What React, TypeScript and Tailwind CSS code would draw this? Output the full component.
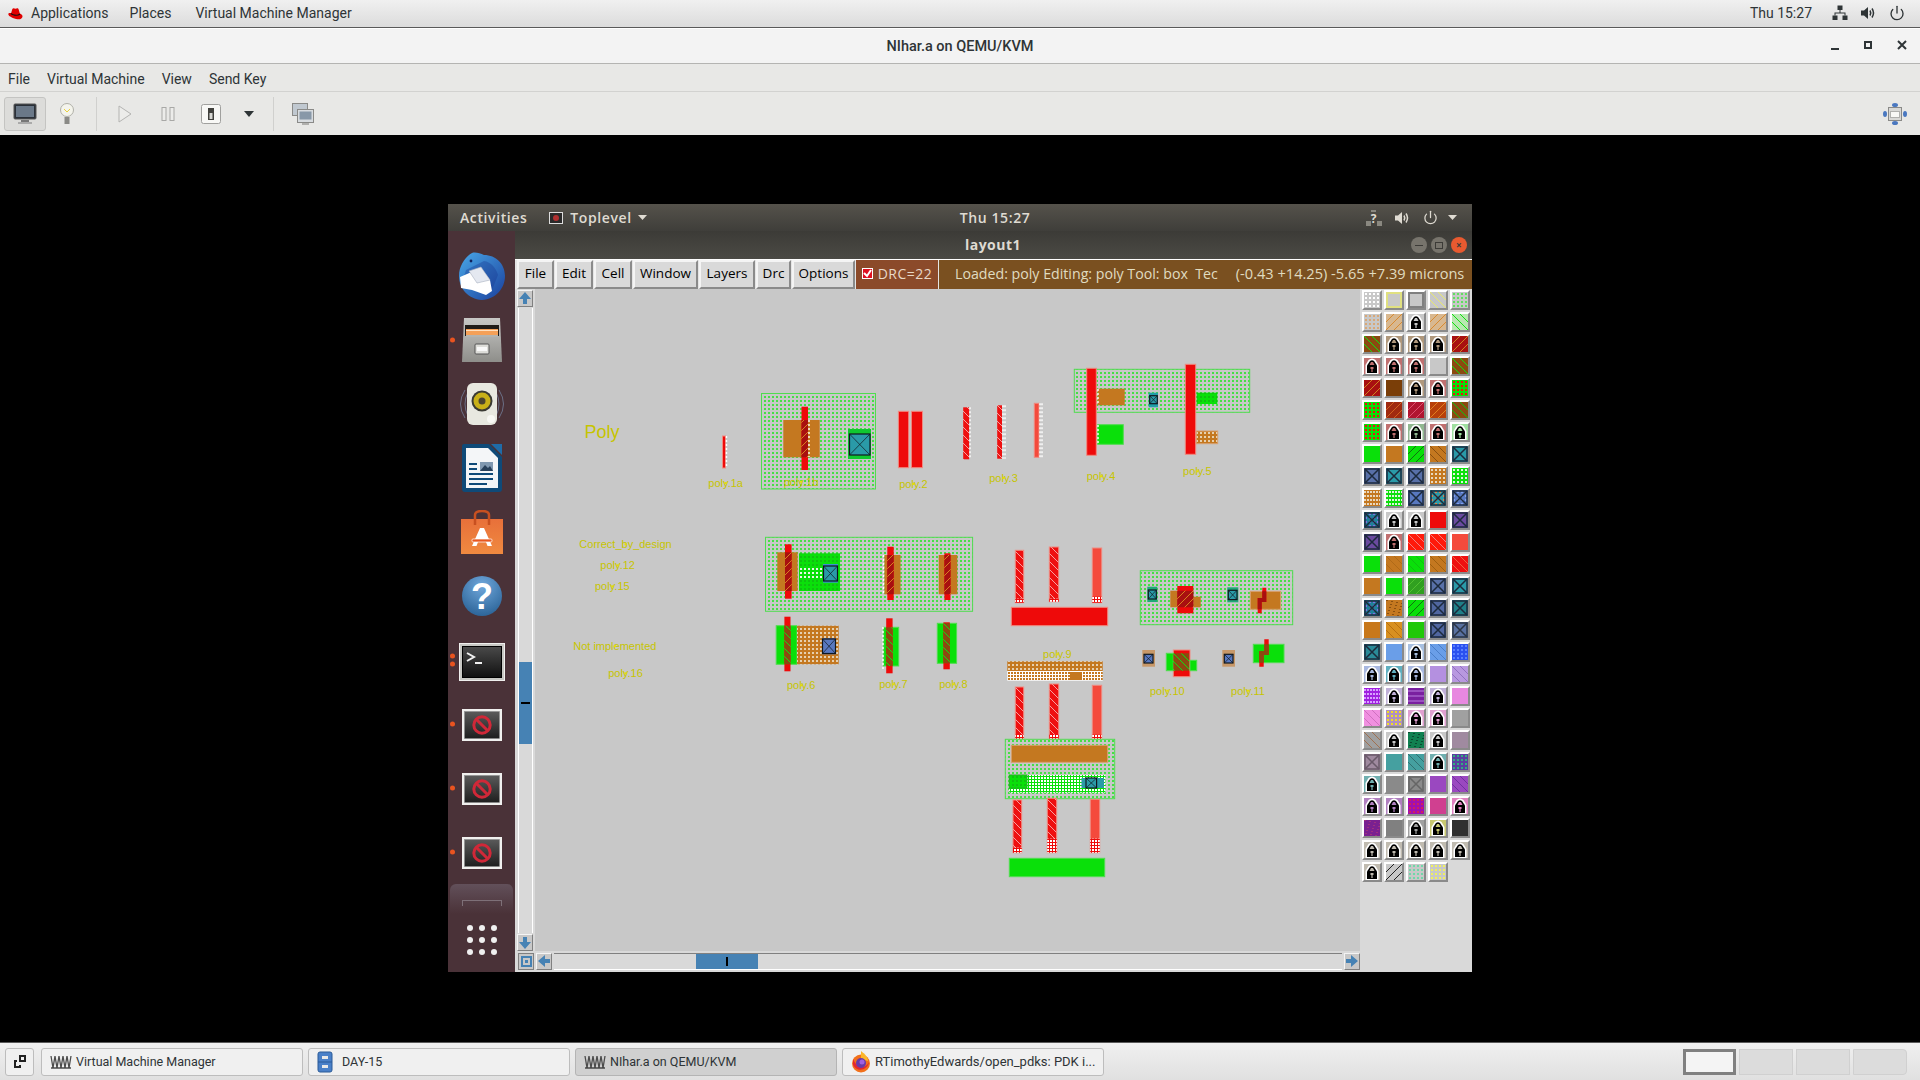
import React from "react";
import { Power } from "lucide-react";

type Cell = [string, string?, string?];

const G = "#c8c8c8";
const GREEN = "#0ae00a";
const ORANGE = "#c47820";
const RED = "#ee0a0a";
const LRED = "#f44a3c";

const lock = (c: string): Cell => [c, "lock", c];
const x = (c: string, l = "#1c2a3c"): Cell => [c, "x", l];
const xd = (c: string, d: string): Cell => [c, "xd", d];

const PALETTE: Cell[] = [
  [G, "dots", "#ffffff"], [G, "frame", "#e0e080"], [G, "frame", "#808080"], [G, "back", "#e8e870"], [G, "dots", "#60e060"],
  [G, "dots", "#d8a878"], ["#d8b890", "slash", "#d88a30"], lock(G), ["#d8b890", "slash", "#d88a30"], ["#b8e8b0", "back", "#10e010"],
  ["#8b4a10", "back", "#10e010"], lock("#b0987c"), lock("#b0987c"), lock("#b0987c"), ["#a81010", "slash", "#d08020"],
  lock("#c07070"), lock("#c07070"), lock("#c07070"), [G], ["#8b4a10", "back", "#10e010"],
  ["#a81010", "slash", "#d08020"], ["#7a3e08"], lock("#b0987c"), lock("#c07070"), [GREEN, "dots", "#ee1010"],
  [GREEN, "dots", "#ee1010"], ["#a02a10", "slash", "#d06020"], ["#b01530", "slash", "#e05070"], ["#b8400a", "slash", "#e08020"], ["#8b4a10", "back", "#10c010"],
  [GREEN, "dots", "#ee1010"], lock("#c07070"), lock("#90b890"), lock("#c07070"), lock("#a0e0a0"),
  [GREEN], [ORANGE], [GREEN, "slash", "#107010"], [ORANGE, "back", "#8a5010"], x("#2a9aa8"),
  x("#5870a8"), x("#2a9aa8"), x("#5870a8"), [ORANGE, "dots", "#e8d8c0"], [GREEN, "dots", "#e0f0e0"],
  [ORANGE, "dense", "#e8d8c0"], [GREEN, "dense", "#e0f0e0"], x("#5878c0"), xd("#2a9aa8", "#d08050"), xd("#5878c0", "#80a0f0"),
  xd("#20809a", "#8070e0"), lock(G), lock(G), [RED], x("#6a4aa0"),
  x("#6a4aa0"), lock("#c07070"), ["#ff1a0a", "back", "#f08080"], ["#ff1a0a", "back", "#f08080"], [LRED],
  [GREEN], [ORANGE, "back", "#b06a18"], [GREEN, "back", "#10c010"], [ORANGE, "back", "#a06010"], ["#ee1010", "back", "#f06040"],
  [ORANGE], [GREEN], ["#30a020", "slash", "#50c030"], x("#5870a8"), x("#2a9aa8"),
  xd("#20809a", "#8070e0"), [ORANGE, "speck", "#8a5010"], [GREEN, "slash", "#107010"], x("#5066a0"), x("#1f8088"),
  ["#c8781a"], ["#d89020", "back", "#b87010"], ["#20c808"], x("#5066a0"), x("#5870a0", "#2a3444"),
  x("#2a8a98"), ["#6a9ee8"], lock("#a8c0e0"), ["#6a9ee8", "back", "#4a7ec8"], ["#2a50f0", "dots", "#5a80ff"],
  lock("#a8b8e0"), lock("#60b0c0"), lock("#a8b8e0"), ["#b490e0"], ["#b898e0", "back", "#9070c0"],
  ["#a020e0", "dense", "#d8a0ff"], lock("#c0b0d8"), ["#7a20a0", "bands", "#9a50c0"], lock("#c0b0d8"), ["#e888e0"],
  ["#f090e0", "back", "#d070c0"], ["#b090c0", "dots", "#f0e020"], lock("#e0a0d0"), lock("#e0a0d0"), ["#a0a0a0"],
  ["#a0a0a0", "back", "#a07050"], lock(G), ["#108050", "speck", "#0a4a30"], lock(G), ["#a08aa0"],
  x("#a08aa0", "#6a5a6a"), ["#45a0a0"], ["#45a0a0", "back", "#307070"], lock("#70b0b0"), ["#5a40a0", "dots", "#30b080"],
  lock("#70b0b0"), ["#8a8a8a"], x("#8a8a8a", "#666666"), ["#9a48c0"], ["#9a48c0", "back", "#7030a0"],
  lock("#b080c0"), lock("#b080c0"), ["#a010b0", "dots", "#d02060"], ["#d04090"], lock("#e080c0"),
  ["#7a2090", "speck", "#a03080"], ["#808080"], lock("#a0a0a0"), lock("#c8c870"), ["#303030"],
  lock("#c0bbb0"), lock("#c0bbb0"), lock("#c0bbb0"), lock("#c0bbb0"), lock("#c0bbb0"),
  lock("#c0bbb0"), [G, "slash", "#222222"], [G, "dots", "#70d8a8"], [G, "dots", "#f0f060"],
];

const RANGE = [1, 5, 9, 13];

function CellArt({ cell }: { cell: Cell }) {
  const [bg, kind, c] = cell;
  return (
    <svg width="16" height="16" viewBox="0 0 16 16" shapeRendering="crispEdges">
      <rect width="16" height="16" fill={bg} />
      {kind === "dots" &&
        RANGE.flatMap((a) => RANGE.map((b) => <rect key={`${a}-${b}`} x={a} y={b} width="2" height="2" fill={c} />))}
      {kind === "dense" &&
        [0, 3, 6, 9, 12, 15].flatMap((a) =>
          [1, 5, 9, 13].map((b) => <rect key={`${a}-${b}`} x={a} y={b} width="2" height="2" fill={c} />)
        )}
      {kind === "speck" &&
        Array.from({ length: 40 }, (_, i) => (
          <rect key={i} x={(i * 7) % 16} y={(i * 11) % 16} width="2" height="1" fill={c} />
        ))}
      {kind === "bands" &&
        [2, 7, 12].map((b) => <rect key={b} y={b} width="16" height="2" fill={c} />)}
      {kind === "frame" && <rect x="1" y="1" width="14" height="14" fill="none" stroke={c} strokeWidth="2" />}
      {(kind === "back" || kind === "slash") &&
        [-16, -8, 0, 8].map((o) => (
          <line
            key={o}
            x1={o}
            y1={kind === "back" ? 0 : 16}
            x2={o + 16}
            y2={kind === "back" ? 16 : 0}
            stroke={c}
            strokeWidth="1"
            shapeRendering="auto"
          />
        ))}
      {kind === "xd" &&
        RANGE.flatMap((a) => RANGE.map((b) => <rect key={`${a}-${b}`} x={a} y={b} width="2" height="2" fill={c} />))}
      {(kind === "x" || kind === "xd") && (
        <g fill="none" stroke={kind === "x" ? c : "#1c2a3c"} strokeWidth="1.5" shapeRendering="auto">
          <rect x="1" y="1" width="14" height="14" />
          <path d="M1 1L15 15M15 1L1 15" />
        </g>
      )}
      {kind === "lock" && (
        <g shapeRendering="auto">
          <path d="M1.5 16V7L4.5 2Q8 -1 11.5 2L14.5 7V16Z" fill="#ffffff" />
          <path d="M3 15V7.5L6 3Q8 1.5 10 3L13 7.5V15Z" fill="#000000" />
          <path d="M5.5 7L7 4H9L10.5 7Z" fill={c} />
          <rect x="6.5" y="9" width="3" height="2" fill={c} />
          <rect x="7.4" y="11" width="1.2" height="3" fill={c} />
        </g>
      )}
    </svg>
  );
}

function Dots({ id, bg, c, p = 4, s = 2 }: { id: string; bg?: string; c: string; p?: number; s?: number }) {
  return (
    <pattern id={id} width={p} height={p} patternUnits="userSpaceOnUse">
      {bg && <rect width={p} height={p} fill={bg} />}
      <rect width={s} height={s} fill={c} />
    </pattern>
  );
}

function Hatch({ id, bg, c, back }: { id: string; bg: string; c: string; back?: boolean }) {
  return (
    <pattern id={id} width="8" height="8" patternUnits="userSpaceOnUse">
      <rect width="8" height="8" fill={bg} />
      <path d={back ? "M0 0L8 8" : "M0 8L8 0"} stroke={c} strokeWidth="1" />
    </pattern>
  );
}

type RectProps = { b: number[]; f: string; s?: string };
function R({ b, f, s }: RectProps) {
  return <rect x={b[0]} y={b[1]} width={b[2] - b[0]} height={b[3] - b[1]} fill={f} stroke={s} />;
}

// dotted white edge next to a poly bar
function Edge({ at, y1, y2 }: { at: number; y1: number; y2: number }) {
  return <line x1={at} y1={y1} x2={at} y2={y2} stroke="#ffffff" strokeWidth="1.4" strokeDasharray="2 2" />;
}

function Via({ o, oc, b, c = "#2a9aa8" }: { o: number[]; oc: string; b: number[]; c?: string }) {
  return (
    <g>
      <R b={o} f={oc} />
      <rect x={b[0]} y={b[1]} width={b[2] - b[0]} height={b[3] - b[1]} fill={c} stroke="#101820" strokeWidth="1.2" />
      <path d={`M${b[0]} ${b[1]}L${b[2]} ${b[3]}M${b[2]} ${b[1]}L${b[0]} ${b[3]}`} stroke="#101820" strokeWidth="0.7" />
    </g>
  );
}

function Label({ x: lx, y, t, big }: { x: number; y: number; t: string; big?: boolean }) {
  return (
    <g>
      <text x={lx} y={y} textAnchor="middle" dominantBaseline="central" fill="#c6c400" fontSize={big ? 18 : 11}>
        {t}
      </text>
      {!big && <rect x={lx - 1} y={y - 1} width="2" height="2" fill="#e8e000" />}
    </g>
  );
}

function Bar({ b, f, dots }: { b: number[]; f: string; dots: number }) {
  const top = b[3] - dots;
  return (
    <g>
      <R b={b} f={f} s="#f08a80" />
      <R b={[b[0], top, b[2], b[3]]} f="url(#whiteOnRed)" />
    </g>
  );
}

function LayoutCanvas() {
  return (
    <svg viewBox="535 290 825 661" className="block h-full w-full font-['Liberation_Sans',sans-serif]">
      <defs>
        <Dots id="well" c="#46de46" />
        <Dots id="orangeDots" bg="#c47820" c="#e6d0b0" />
        <Dots id="greenDots" bg="#0ae00a" c="#e8f8e8" />
        <Dots id="greenDark" bg="#0ae00a" c="#10c010" />
        <Dots id="whiteOnRed" bg="#ee0a0a" c="#ffffff" p={3} />
        <Dots id="whiteOrange" bg="#ffffff" c="#c47820" p={3} />
        <Dots id="whiteGreen" bg="#0ae00a" c="#ffffff" p={3} s={2} />
        <Hatch id="polyGate" bg="#a81010" c="#d88020" />
        <Hatch id="nGate" bg="#8b4a10" c="#10e010" back />
        <Hatch id="polyRes" bg="#ee1010" c="#f8a0a0" back />
      </defs>

      <Label x={602} y={432} t="Poly" big />
      <Label x={725.6} y={483} t="poly.1a" />
      <Label x={913.4} y={484} t="poly.2" />
      <Label x={1003.5} y={478} t="poly.3" />
      <Label x={1101} y={476.3} t="poly.4" />
      <Label x={1197.3} y={471.3} t="poly.5" />
      <Label x={625.5} y={544.3} t="Correct_by_design" />
      <Label x={617.6} y={565.3} t="poly.12" />
      <Label x={612.3} y={586.3} t="poly.15" />
      <Label x={614.8} y={646} t="Not implemented" />
      <Label x={625.5} y={673.3} t="poly.16" />
      <Label x={801.2} y={685.3} t="poly.6" />
      <Label x={893.4} y={684.3} t="poly.7" />
      <Label x={953.4} y={684.3} t="poly.8" />
      <Label x={1057.3} y={654.3} t="poly.9" />
      <Label x={1167.3} y={690.7} t="poly.10" />
      <Label x={1248} y={690.7} t="poly.11" />

      {/* poly.1a */}
      <R b={[722.5, 436, 725.5, 468]} f={RED} s="#f08a80" />
      <Edge at={726.5} y1={436} y2={468} />

      {/* poly.1b */}
      <R b={[761.5, 393.5, 875.5, 489]} f="url(#well)" s="#50dc50" />
      <Label x={801} y={481.7} t="poly.1b" />
      <R b={[783.3, 420, 819.7, 457.3]} f={ORANGE} />
      <R b={[801.5, 406.7, 808, 470]} f={RED} />
      <R b={[801.5, 420, 808, 457.3]} f="url(#polyGate)" />
      <Edge at={809} y1={420} y2={457} />
      <Via o={[848, 429, 871, 459]} oc="#10c830" b={[849.5, 434, 870, 455]} />

      {/* poly.2 */}
      <R b={[898.4, 411.3, 908.7, 467.7]} f={RED} s="#f08a80" />
      <R b={[911.4, 411.3, 922.5, 467.7]} f={RED} s="#f08a80" />

      {/* poly.3 */}
      <R b={[963.2, 407.3, 969.2, 459.3]} f="url(#polyRes)" />
      <Edge at={970} y1={407.3} y2={459.3} />
      <R b={[997.2, 405.3, 1002, 458.7]} f="url(#polyRes)" />
      <Edge at={1003} y1={405.3} y2={458.7} />
      <Edge at={1005} y1={405.3} y2={458.7} />
      <R b={[1034.3, 403.3, 1039, 457.3]} f={LRED} s="#f08a80" />
      <Edge at={1040} y1={403.3} y2={457.3} />
      <Edge at={1042} y1={403.3} y2={457.3} />

      {/* poly.4, poly.5 */}
      <R b={[1074.3, 369.3, 1249.7, 412.3]} f="url(#well)" s="#50dc50" />
      <R b={[1097.7, 388.7, 1124.7, 405.3]} f={ORANGE} />
      <R b={[1097.7, 424.7, 1123.3, 444.3]} f={GREEN} s="#50dc50" />
      <R b={[1086.7, 368.3, 1096.3, 455.3]} f={RED} s="#f08a80" />
      <R b={[1185.3, 364.3, 1195.7, 454.3]} f={RED} s="#f08a80" />
      <Edge at={1098} y1={389} y2={405} />
      <Edge at={1098} y1={425} y2={444} />
      <Via o={[1148.7, 392.7, 1158, 407.3]} oc="#20a0a8" b={[1149.7, 395.7, 1157.3, 403.7]} />
      <R b={[1196.7, 392.7, 1217.3, 404]} f="url(#greenDark)" />
      <R b={[1196.3, 431, 1217.7, 443.7]} f="url(#orangeDots)" s="#d8a070" />

      {/* poly.12 / 15 */}
      <R b={[765.5, 537.3, 972.6, 611.3]} f="url(#well)" s="#50dc50" />
      <R b={[777.3, 552.3, 797.6, 591]} f={ORANGE} />
      <R b={[785, 544.3, 791.6, 598.7]} f={RED} />
      <R b={[785, 552.3, 791.6, 591]} f="url(#polyGate)" />
      <R b={[799, 553.3, 840, 591]} f="url(#greenDark)" />
      <R b={[799, 566, 823, 580]} f="url(#greenDots)" />
      <Via o={[823, 564, 838, 582.7]} oc="#3a90d0" b={[823.5, 566, 837.5, 581]} />
      <R b={[884.4, 555, 900.5, 594.3]} f={ORANGE} />
      <R b={[887.3, 546.7, 893.7, 600]} f={RED} />
      <R b={[887.3, 555, 893.7, 594.3]} f="url(#polyGate)" />
      <Edge at={883.5} y1={555} y2={594} />
      <R b={[938.7, 555, 957.3, 594.3]} f={ORANGE} />
      <R b={[944.4, 553.3, 950.5, 600]} f={RED} />
      <R b={[944.4, 555, 950.5, 594.3]} f="url(#polyGate)" />

      {/* poly.6, 7, 8 */}
      <R b={[776.2, 625.7, 797, 664.3]} f={GREEN} s="#50dc50" />
      <R b={[797, 625.7, 838.7, 664.3]} f="url(#orangeDots)" />
      <R b={[784.4, 616.7, 790.5, 671.3]} f={RED} />
      <R b={[784.4, 625.7, 790.5, 664.3]} f="url(#nGate)" />
      <Via o={[822, 638.3, 836, 654.3]} oc="#5878c0" b={[822.5, 639, 835.5, 653.5]} c="#5878c0" />
      <R b={[883.7, 627.3, 898.7, 666]} f={GREEN} s="#50dc50" />
      <R b={[886.2, 618.3, 892.6, 673.3]} f={RED} />
      <R b={[886.2, 627.3, 892.6, 666]} f="url(#nGate)" />
      <Edge at={883} y1={627} y2={670} />
      <R b={[937.3, 623.3, 956.6, 663.3]} f={GREEN} s="#50dc50" />
      <R b={[943.4, 622.3, 949.8, 669.3]} f={RED} />
      <R b={[943.4, 623.3, 949.8, 663.3]} f="url(#nGate)" />

      {/* poly.9 */}
      <Bar b={[1015.3, 550.3, 1023.7, 602.7]} f="url(#polyRes)" dots={4} />
      <Bar b={[1049.3, 547, 1058.7, 601.7]} f="url(#polyRes)" dots={3} />
      <Bar b={[1092.3, 548, 1101.7, 602.7]} f={LRED} dots={6} />
      <R b={[1011.3, 607.3, 1107.7, 625.7]} f={RED} s="#f08a80" />
      <R b={[1007.3, 661.3, 1102.7, 671]} f="url(#orangeDots)" />
      <R b={[1007.3, 671, 1102.7, 680.7]} f="url(#whiteOrange)" />
      <R b={[1070, 672, 1082, 680]} f={ORANGE} />
      <Bar b={[1015.3, 687, 1023.7, 738.7]} f="url(#polyRes)" dots={4} />
      <Bar b={[1049.3, 684, 1058.7, 738.7]} f="url(#polyRes)" dots={4} />
      <Bar b={[1092.3, 685.3, 1101.7, 738.7]} f={LRED} dots={4} />
      <R b={[1005.3, 739.3, 1114.7, 798.7]} f="url(#well)" s="#50dc50" />
      <R b={[1011.3, 745.3, 1107.7, 762.3]} f={ORANGE} s="#d8a070" />
      <R b={[1009.3, 775, 1105.3, 792.7]} f="url(#whiteGreen)" />
      <R b={[1009.3, 775, 1027, 788]} f="url(#greenDark)" s="#20b020" />
      <R b={[1081.5, 778, 1104, 788]} f="#2a9aa8" />
      <Via o={[1086, 778, 1096.6, 788]} oc="#2a9aa8" b={[1086, 778, 1096.6, 788]} />
      <Bar b={[1013, 800, 1021.7, 852.7]} f="url(#polyRes)" dots={5} />
      <Bar b={[1047.3, 798.3, 1056.7, 852.7]} f="url(#polyRes)" dots={14} />
      <Bar b={[1090.3, 799.3, 1099.7, 852.7]} f={LRED} dots={14} />
      <R b={[1009.3, 858.3, 1104.7, 876.7]} f={GREEN} s="#50dc50" />

      {/* poly.10, poly.11 */}
      <R b={[1140.3, 570.7, 1292.7, 624.7]} f="url(#well)" s="#50dc50" />
      <Via o={[1147.3, 586.7, 1157.3, 602]} oc="#20a878" b={[1148.3, 590, 1156.3, 599]} />
      <R b={[1170.3, 590.7, 1177.3, 607.3]} f={ORANGE} />
      <R b={[1193.3, 596.7, 1200.7, 607.3]} f={ORANGE} />
      <R b={[1177.3, 586, 1193.3, 613.3]} f={RED} />
      <R b={[1177.3, 590.7, 1193.3, 607.3]} f="url(#polyGate)" />
      <Via o={[1227.3, 587.3, 1238.3, 602.3]} oc="#20a878" b={[1228.3, 590.3, 1237, 599.6]} />
      <R b={[1250.3, 591.3, 1280.7, 609.3]} f={ORANGE} s="#d8a070" />
      <polygon points="1262.3,587.7 1266.3,587.7 1266.3,602 1261.7,602 1261.7,613.3 1257.7,613.3 1257.7,598 1262.3,598" fill={RED} />
      <polygon points="1262.3,591.3 1266.3,591.3 1266.3,602 1261.7,602 1261.7,609.3 1257.7,609.3 1257.7,598 1262.3,598" fill="#a81010" />
      <Via o={[1142.3, 650, 1155, 666.7]} oc="#c89868" b={[1144, 654.3, 1153, 663]} c="#5878c0" />
      <R b={[1173.3, 650, 1190, 676.7]} f={RED} s="#f08a80" />
      <R b={[1166.3, 653.3, 1173.3, 670.7]} f={GREEN} s="#50dc50" />
      <R b={[1190, 660.3, 1196.7, 670.7]} f={GREEN} s="#50dc50" />
      <R b={[1173.3, 653.3, 1189, 670.7]} f="url(#nGate)" />
      <Via o={[1222.3, 650, 1235, 666.7]} oc="#c89868" b={[1224.3, 654.3, 1233, 663]} c="#5878c0" />
      <R b={[1253.3, 644.3, 1284, 662.7]} f={GREEN} s="#50dc50" />
      <polygon points="1264.3,639.3 1268.7,639.3 1268.7,655 1263.7,655 1263.7,666.7 1259.3,666.7 1259.3,651 1264.3,651" fill={RED} />
      <polygon points="1264.3,644.3 1268.7,644.3 1268.7,655 1263.7,655 1263.7,662.7 1259.3,662.7 1259.3,651 1264.3,651" fill="#8b4a10" />
    </svg>
  );
}

function Thunderbird() {
  return (
    <svg width="48" height="48" viewBox="0 0 48 48">
      <defs>
        <linearGradient id="tb" x1="0" y1="0" x2="1" y2="1">
          <stop offset="0" stopColor="#49a8e8" />
          <stop offset="1" stopColor="#1a3f9c" />
        </linearGradient>
      </defs>
      <path d="M14 1C7 5 1 14 1 24C1 36 10 47 24 48C38 47 47 36 47 24C47 12 38 3 26 3C22 1 17 0 14 1Z" fill="url(#tb)" />
      <path d="M8 18L26 9C33 10 38 16 40 23L34 38L27 41L4 31Z" fill="#16358c" opacity="0.35" />
      <path d="M2 25L23 16L32 28L34 39L28 43L14 38L3 36Z" fill="#ffffff" />
      <path d="M11 19L23 15L32 28L19 31Z" fill="#e4e8f0" stroke="#a8b0c0" strokeWidth="0.6" />
      <circle cx="13" cy="9" r="1.4" fill="#10225c" />
    </svg>
  );
}

function Cabinet() {
  return (
    <svg width="42" height="46" viewBox="0 0 42 46">
      <defs>
        <linearGradient id="cab" x1="0" y1="0" x2="0" y2="1">
          <stop offset="0" stopColor="#c8c8c6" />
          <stop offset="1" stopColor="#8e8e8a" />
        </linearGradient>
      </defs>
      <path d="M3 1H39L41 45H1Z" fill="url(#cab)" />
      <rect x="4" y="8" width="34" height="11" fill="#201c18" />
      <rect x="5" y="12" width="32" height="6" fill="#f4a058" />
      <rect x="5" y="13" width="32" height="1" fill="#ffe0c0" />
      <rect x="5" y="18" width="32" height="2" fill="#b4b4b0" />
      <rect x="14" y="27" width="14" height="10" rx="1" fill="#dcdcd8" stroke="#555" />
      <rect x="16" y="30" width="10" height="4" fill="#f8f8f8" />
    </svg>
  );
}

function Speaker() {
  return (
    <svg width="48" height="44" viewBox="0 0 48 44">
      <g fill="none" stroke="#7a8aa8" strokeWidth="1" opacity="0.7">
        <path d="M7 8Q-2 22 7 36" />
        <path d="M41 8Q50 22 41 36" />
        <path d="M10 10Q4 22 10 34" />
        <path d="M38 10Q44 22 38 34" />
      </g>
      <rect x="9" y="1" width="30" height="42" rx="6" fill="#e8e8e0" />
      <circle cx="24" cy="19" r="10.500" fill="#3a3a34" />
      <circle cx="24" cy="19" r="8.500" fill="#c8b018" />
      <circle cx="24" cy="19" r="3.500" fill="#4a4430" />
      <circle cx="33" cy="37" r="4" fill="#f8f8f4" />
    </svg>
  );
}

function Writer() {
  return (
    <svg width="42" height="50" viewBox="0 0 42 50">
      <path d="M3 1H28L41 14V46Q41 49 38 49H4Q1 49 1 46V3Q1 1 3 1Z" fill="#0f4a78" />
      <path d="M5 5H27L37 15V45H5Z" fill="#f4f6f8" />
      <path d="M30 1H41V12Z" fill="#1f6ca8" />
      <rect x="19" y="19" width="13" height="9" fill="#8098b0" />
      <path d="M19 28L24 22L27 25L29 23L32 28Z" fill="#28405a" />
      <g fill="#0f4a78">
        <rect x="8" y="20" width="8" height="2" />
        <rect x="8" y="25" width="8" height="2" />
        <rect x="8" y="30" width="24" height="2" />
        <rect x="8" y="35" width="24" height="2" />
        <rect x="8" y="40" width="18" height="2" />
      </g>
    </svg>
  );
}

function Store() {
  return (
    <svg width="42" height="44" viewBox="0 0 42 44">
      <defs>
        <linearGradient id="bag" x1="0" y1="0" x2="0" y2="1">
          <stop offset="0" stopColor="#e8703a" />
          <stop offset="1" stopColor="#f08a40" />
        </linearGradient>
      </defs>
      <rect y="9" width="42" height="35" fill="url(#bag)" />
      <path d="M14 15V5Q14 1 21 1Q28 1 28 5V15" fill="none" stroke="#c85020" strokeWidth="2.5" />
      <path d="M11 36L19 18H23L31 36H26.500L25 32H17L15.500 36Z" fill="#ffffff" />
      <rect x="11" y="29" width="20" height="3" rx="1" fill="#e85820" stroke="#fff" strokeWidth="0.7" />
    </svg>
  );
}

function Help() {
  return (
    <svg width="42" height="42" viewBox="0 0 42 42" className="font-['Liberation_Sans',sans-serif]">
      <defs>
        <radialGradient id="hlp" cx="0.5" cy="0.25" r="0.85">
          <stop offset="0" stopColor="#70a8dc" />
          <stop offset="1" stopColor="#245c90" />
        </radialGradient>
      </defs>
      <circle cx="21" cy="21" r="20" fill="url(#hlp)" />
      <text x="21" y="34" textAnchor="middle" fill="#ffffff" fontSize="36" fontWeight="700">
        ?
      </text>
    </svg>
  );
}

function Terminal() {
  return (
    <svg width="46" height="38" viewBox="0 0 46 38" className="mt-[3px]">
      <defs>
        <linearGradient id="term" x1="0" y1="0" x2="0" y2="1">
          <stop offset="0" stopColor="#4a4a4a" />
          <stop offset="1" stopColor="#101010" />
        </linearGradient>
      </defs>
      <rect x="0.500" y="0.500" width="45" height="37" fill="#c8c8c4" stroke="#f0f0ee" />
      <rect x="3.500" y="3.500" width="39" height="31" fill="url(#term)" stroke="#000" />
      <path d="M8 10L15 14L8 18" fill="none" stroke="#f0f0f0" strokeWidth="2" />
      <rect x="16" y="19" width="7" height="2" fill="#f0f0f0" />
    </svg>
  );
}

function Blocked() {
  return (
    <svg width="40" height="32" viewBox="0 0 40 32" className="mt-[1px]">
      <defs>
        <linearGradient id="blk" x1="0" y1="0" x2="0" y2="1">
          <stop offset="0" stopColor="#5a5a5a" />
          <stop offset="1" stopColor="#1e1e1e" />
        </linearGradient>
      </defs>
      <rect width="40" height="32" fill="#f0f0ee" />
      <rect x="2.500" y="2.500" width="35" height="27" fill="url(#blk)" stroke="#888" strokeWidth="0.5" />
      <circle cx="20" cy="16" r="8.200" fill="none" stroke="#d02838" strokeWidth="3" />
      <path d="M14.500 10.500L25.500 21.500" stroke="#d02838" strokeWidth="3" />
    </svg>
  );
}

function Vmm() {
  return (
    <svg width="22" height="14" viewBox="0 0 22 14" fill="none" stroke="#4c4c4c" strokeWidth="1.300">
      <path d="M1 1L3 13L5 1L7 13L9 1L11 13L13 1L15 13L17 1L19 13L21 1" />
      <path d="M1 13H21" stroke="#333" />
    </svg>
  );
}

function TaskButton({
  active,
  icon,
  label,
  wide,
}: {
  active?: boolean;
  icon: React.ReactNode;
  label: string;
  wide?: boolean;
}) {
  return (
    <div
      className={
        active
          ? "flex h-7 w-[262px] items-center gap-[4px] rounded-[3px] border border-[#b4b4b4] bg-[#d0d0d0] pl-[8px] text-[#2e3436]"
          : "flex h-7 w-[262px] items-center gap-[4px] rounded-[3px] border border-[#bdbdbd] bg-[#f0f0f0] pl-[8px] text-[#2e3436]"
      }
    >
      {icon}
      <span className={wide ? "whitespace-nowrap pt-px text-[13px]" : "whitespace-nowrap pt-px text-[12.5px]"}>
        {label}
      </span>
    </div>
  );
}

function Arrow({ d }: { d: string }) {
  return (
    <div className="flex h-[17px] w-4 items-center justify-center border border-t-[#f4f4f4] border-l-[#f4f4f4] border-b-[#808080] border-r-[#808080] bg-[#c8c8c8]">
      <svg width="14" height="14" viewBox="0 0 14 14">
        <path d={d} fill="#4682b4" />
      </svg>
    </div>
  );
}

function Slot({ dots = 0, children }: { dots?: number; children?: React.ReactNode }) {
  return (
    <div className="relative flex h-16 items-center justify-center">
      {dots > 0 && (
        <div className="absolute left-[2px] top-1/2 flex -translate-y-1/2 flex-col gap-[3px]">
          {Array.from({ length: dots }, (_, i) => (
            <span key={i} className="block h-[5px] w-[5px] rounded-full bg-[#e95420]" />
          ))}
        </div>
      )}
      {children}
    </div>
  );
}

const MENU = ["File", "Edit", "Cell", "Window", "Layers", "Drc", "Options"];
const MENU_W = ["w-[37px]", "w-[38px]", "w-[38px]", "w-[65px]", "w-[56px]", "w-[35px]", "w-[63px]"];

export default function App() {
  return (
    <div className="flex h-screen w-[1920px] flex-col overflow-hidden bg-black font-['Roboto',sans-serif]">
      {/* desktop top panel */}
      <div className="flex h-7 items-center border-b border-[#5a5a5a] bg-gradient-to-b from-[#f0f0f0] to-[#dcdcdc] pb-[1px] text-[14px] text-[#2e3436]">
        <svg width="17" height="13" viewBox="0 0 15 12" className="ml-[7px]">
          <path d="M1 6C0 8 4 10 8 11C11 12 14 11 14 8.500C14 7.500 13 6.500 11.500 6L10.500 2.500C10 1 9 1 7.500 1.700C6 1 5 1 4.500 2L3.500 5.500C2.500 5.500 1.500 5.200 1 6Z" fill="#e00000" />
          <path d="M3.500 5.500C5 7 9 8 11.500 6L11.800 7.200C9 9 5 8 3 6.500Z" fill="#111111" />
        </svg>
        <span className="ml-[7px]">Applications</span>
        <span className="ml-[21px]">Places</span>
        <span className="ml-[24px]">Virtual Machine Manager</span>
        <span className="ml-auto">Thu 15:27</span>
        <svg width="16" height="16" viewBox="0 0 16 16" fill="#2e3436" className="ml-[20px]">
          <rect x="5.500" y="0.500" width="5" height="4.500" />
          <rect x="0.500" y="10.500" width="5" height="4.500" />
          <rect x="10.500" y="10.500" width="5" height="4.500" />
          <path d="M7.500 5H8.500V7.500H13.500V10.500H12.500V8.500H3.500V10.500H2.500V7.500H7.500Z" />
        </svg>
        <svg width="16" height="16" viewBox="0 0 16 16" fill="none" stroke="#2e3436" className="ml-[12px]">
          <path d="M1 5.500H4L8 2V14L4 10.500H1Z" fill="#2e3436" stroke="none" />
          <path d="M10 5.500Q11.500 8 10 10.500" strokeWidth="1.500" />
          <path d="M12 3.500Q15 8 12 12.500" strokeWidth="1.500" />
        </svg>
        <Power size={16} strokeWidth={2} color="#2e3436" className="ml-[13px] mr-[15px]" />
      </div>

      {/* virt-viewer title */}
      <div className="relative flex h-9 items-center justify-center border-t border-b border-t-white border-b-[#b4b4b2] bg-[#f3f3f3] pt-px text-[14.5px] font-medium text-[#2e3436]">
        NIhar.a on QEMU/KVM
        <div className="absolute right-[13px] top-0 flex h-full items-center gap-[25px]">
          <div className="mt-[6px] h-[2px] w-[8px] bg-[#2e3436]" />
          <div className="mt-[-2px] h-[8px] w-[8px] border-2 border-[#2e3436]" />
          <svg width="10" height="10" viewBox="0 0 10 10" stroke="#2e3436" strokeWidth="2" className="mt-[-2px]">
            <path d="M1 1L9 9M9 1L1 9" />
          </svg>
        </div>
      </div>

      {/* menu */}
      <div className="flex h-7 items-center gap-[17px] border-b border-[#d2d2d0] bg-[#e8e8e6] pl-2 pt-[3px] text-[14px] text-[#2e3436]">
        <span>File</span>
        <span>Virtual Machine</span>
        <span>View</span>
        <span>Send Key</span>
      </div>

      {/* toolbar */}
      <div className="flex h-[43px] items-center bg-[#e8e8e6]">
        <div className="ml-1 flex h-[34px] w-[42px] items-center justify-center rounded-[3px] border border-[#c4c4c2] bg-[#dcdcda]">
          <svg width="24" height="22" viewBox="0 0 24 22">
            <rect x="1" y="1" width="22" height="15" rx="1" fill="#2a3038" stroke="#555" />
            <rect x="3" y="3" width="18" height="11" fill="#6a7888" />
            <rect x="8" y="17" width="8" height="2" fill="#777" />
            <rect x="5" y="19" width="14" height="2" fill="#aaa" />
          </svg>
        </div>
        <svg width="16" height="24" viewBox="0 0 16 24" className="ml-[13px]">
          <circle cx="8" cy="8" r="6.500" fill="#f4f4ec" stroke="#b0b0a8" />
          <path d="M5 7L8 10L11 7" fill="none" stroke="#e8d040" />
          <rect x="5.500" y="15" width="5" height="7" fill="#8a8a86" />
        </svg>
        <div className="ml-[21px] h-[34px] w-px bg-[#d0d0ce]" />
        <svg width="14" height="18" viewBox="0 0 14 18" className="ml-[21px]">
          <path d="M1 1L13 9L1 17Z" fill="#ececea" stroke="#b4b4b2" />
        </svg>
        <svg width="14" height="14" viewBox="0 0 14 14" className="ml-[29px]" fill="#ececea" stroke="#a8a8a6">
          <rect x="1" y="0.500" width="4" height="13" />
          <rect x="9" y="0.500" width="4" height="13" />
        </svg>
        <svg width="20" height="20" viewBox="0 0 20 20" className="ml-[26px]">
          <rect x="0.500" y="0.500" width="19" height="19" rx="2" fill="#f8f8f6" stroke="#a0a09e" />
          <rect x="7" y="4" width="6" height="12" fill="#40403c" />
          <rect x="8.500" y="9" width="3" height="6" fill="#d8d8d4" />
        </svg>
        <svg width="10" height="6" viewBox="0 0 10 6" className="ml-[23px]">
          <path d="M0 0H10L5 6Z" fill="#2e3436" />
        </svg>
        <div className="ml-[19px] h-[34px] w-px bg-[#d0d0ce]" />
        <svg width="22" height="22" viewBox="0 0 22 22" className="ml-[18px]">
          <rect x="0.500" y="0.500" width="15" height="12" fill="#c0c8d0" stroke="#8a8a88" />
          <rect x="5.500" y="6.500" width="16" height="13" fill="#d8dce0" stroke="#8a8a88" />
          <rect x="7.500" y="8.500" width="12" height="8" fill="#8898a8" />
          <rect x="10" y="20" width="7" height="2" fill="#b0b0ae" />
        </svg>
        <svg width="24" height="22" viewBox="0 0 24 22" className="ml-auto mr-[13px]">
          <g fill="#4a78c0">
            <ellipse cx="12" cy="2" rx="3" ry="2" />
            <ellipse cx="12" cy="20" rx="3" ry="2" />
            <ellipse cx="2" cy="11" rx="2" ry="3" />
            <ellipse cx="22" cy="11" rx="2" ry="3" />
          </g>
          <rect x="5.500" y="4.500" width="13" height="13" fill="#d8d8d6" stroke="#8a8a88" />
          <rect x="7.500" y="8.500" width="9" height="6" fill="#f8f8f6" stroke="#b0b0ae" />
        </svg>
      </div>

      {/* remote desktop */}
      <div className="flex flex-1 justify-center pt-[69px]">
        <div className="flex h-[768px] w-[1024px] flex-col bg-[#3c3b37]">
          <div className="flex h-[27px] items-center bg-gradient-to-b from-[#55524b] to-[#3f3e3a] font-['Open_Sans',sans-serif] text-[14px] font-semibold tracking-[0.6px] text-[#dfdbd2]">
            <span className="ml-3">Activities</span>
            <svg width="14" height="12" viewBox="0 0 14 12" className="ml-[22px]">
              <rect x="0.500" y="0.500" width="13" height="11" fill="#2a2a2a" stroke="#ddd" />
              <circle cx="7" cy="6" r="3" fill="#b03030" />
            </svg>
            <span className="ml-[7px]">Toplevel</span>
            <svg width="9" height="5" viewBox="0 0 9 5" className="ml-[6px]">
              <path d="M0 0H9L4.500 5Z" fill="#dfdbd2" />
            </svg>
            <span className="ml-[313px]">Thu 15:27</span>
            <svg width="16" height="16" viewBox="0 0 16 16" fill="#8a8880" className="ml-auto">
              <rect x="5" y="0" width="5" height="2" />
              <rect x="0" y="11" width="5" height="5" />
              <rect x="11" y="11" width="5" height="5" />
              <text x="8" y="13" textAnchor="middle" fontSize="12" fontWeight="700" fill="#dfdbd2">
                ?
              </text>
            </svg>
            <svg width="16" height="16" viewBox="0 0 16 16" fill="none" stroke="#dfdbd2" className="ml-[12px]">
              <path d="M1 5.500H4L8 2V14L4 10.500H1Z" fill="#dfdbd2" stroke="none" />
              <path d="M10 5.500Q11.500 8 10 10.500" strokeWidth="1.500" />
              <path d="M12 3.500Q15 8 12 12.500" strokeWidth="1.500" />
            </svg>
            <Power size={15} strokeWidth={2} color="#dfdbd2" className="ml-[13px]" />
            <svg width="9" height="5" viewBox="0 0 9 5" className="ml-[10px] mr-[15px]">
              <path d="M0 0H9L4.500 5Z" fill="#dfdbd2" />
            </svg>
          </div>

          <div className="flex flex-1">
            {/* launcher */}
            <div className="flex w-[67px] flex-col bg-[#4a3238] pt-[13px]">
              <Slot>
                <Thunderbird />
              </Slot>
              <Slot dots={1}>
                <Cabinet />
              </Slot>
              <Slot>
                <Speaker />
              </Slot>
              <Slot>
                <Writer />
              </Slot>
              <Slot>
                <Store />
              </Slot>
              <Slot>
                <Help />
              </Slot>
              <Slot dots={2}>
                <Terminal />
              </Slot>
              <Slot dots={1}>
                <Blocked />
              </Slot>
              <Slot dots={1}>
                <Blocked />
              </Slot>
              <Slot dots={1}>
                <Blocked />
              </Slot>
              <div className="mx-[2px] flex h-[30px] justify-center rounded-t-[6px] bg-gradient-to-b from-[#62505a] to-[#4a3238] pt-4">
                <div className="h-[6px] w-10 border border-b-0 border-[#7e7078]" />
              </div>
              <div className="mt-[11px] grid w-fit grid-cols-3 gap-[6px] self-center">
                {Array.from({ length: 9 }, (_, i) => (
                  <span key={i} className="block h-[6px] w-[6px] rounded-full bg-[#f0f0f0]" />
                ))}
              </div>
            </div>

            {/* magic window */}
            <div className="flex flex-1 flex-col">
              <div className="relative flex h-[28px] items-center justify-center bg-gradient-to-b from-[#3c3b37] to-[#4b4a45] pb-[2px] font-['Open_Sans',sans-serif] text-[14px] font-bold tracking-[0.5px] text-[#dfdbd2]">
                <span className="ml-[-1px]">layout1</span>
                <div className="absolute right-[5px] top-[6px] flex gap-1">
                  <div className="flex h-4 w-4 items-center justify-center rounded-full bg-[#77746c]">
                    <div className="h-px w-2 bg-[#3c3b37]" />
                  </div>
                  <div className="flex h-4 w-4 items-center justify-center rounded-full bg-[#77746c]">
                    <div className="h-[7px] w-2 border border-[#3c3b37]" />
                  </div>
                  <div className="flex h-4 w-4 items-center justify-center rounded-full bg-[#e85a30] text-[10px] leading-none text-[#3c3b37]">
                    ×
                  </div>
                </div>
              </div>

              <div className="flex h-[30px] items-stretch border-t border-white bg-[#e4e4e4] pl-[2px] font-['Open_Sans',sans-serif] text-[14px] text-black">
                <div className="flex gap-[1px] text-[13.5px]">
                  {MENU.map((m, i) => (
                    <div
                      key={m}
                      className={`flex items-center justify-center border-2 border-t-[#f4f4f4] border-l-[#f4f4f4] border-r-[#8a8a8a] border-b-[#8a8a8a] bg-[#d9d9d9] pb-[2px] ${MENU_W[i]}`}
                    >
                      {m}
                    </div>
                  ))}
                </div>
                <div className="ml-[1px] flex w-[82px] items-center justify-center gap-[5px] bg-[#8b4a2a] pb-[2px] tracking-[0.5px] text-[#e8d8c8]">
                  <span className="flex h-[11px] w-[11px] items-center justify-center border border-white bg-[#e01020]">
                    <svg width="9" height="9" viewBox="0 0 9 9" fill="none" stroke="#ffffff" strokeWidth="2">
                      <path d="M1 4L4 7L8 1" />
                    </svg>
                  </span>
                  DRC=22
                </div>
                <div className="ml-px flex flex-1 items-center whitespace-pre bg-[#7a5020] pb-[2px] pl-[16px] text-[#e0dcc0]">
                  <span className="text-[14.2px]">Loaded: poly Editing: poly Tool: box  Tec</span>
                  <span className="ml-[18px] text-[14.6px]">(-0.43 +14.25) -5.65 +7.39 microns</span>
                </div>
              </div>

              <div className="flex flex-1 bg-[#d9d9d9]">
                <div className="flex w-[845px] flex-col">
                  <div className="flex h-[662px]">
                    <div className="flex w-[20px] flex-col items-center pt-[1px]">
                      <Arrow d="M7 1L13 8H9V13H5V8H1Z" />
                      <div className="mb-px mt-px flex h-[626px] w-[15px] justify-center border-x border-white bg-[#d9d9d9] pt-[354px]">
                        <div className="flex h-[82px] w-[13px] items-start justify-center bg-[#4682b4] pt-[40px]">
                          <div className="h-[2px] w-[9px] bg-black" />
                        </div>
                      </div>
                      <Arrow d="M7 13L13 6H9V1H5V6H1Z" />
                    </div>
                    <div className="flex-1 bg-[#c8c8c8] pt-px">
                      <LayoutCanvas />
                    </div>
                  </div>
                  <div className="flex h-[20px] items-center gap-[2px] pl-[3px]">
                    <div className="flex h-[17px] w-4 items-center justify-center border border-[#808080] bg-[#c8c8c8]">
                      <div className="flex h-[11px] w-[11px] items-center justify-center border-2 border-[#4682b4]">
                        <div className="h-[3px] w-[3px] bg-[#4682b4]" />
                      </div>
                    </div>
                    <Arrow d="M1 7L8 1V5H13V9H8V13Z" />
                    <div className="flex h-[17px] w-[788px] items-stretch border-y border-t-[#808080] border-b-white bg-[#d9d9d9] pl-[142px]">
                      <div className="flex w-[62px] items-center justify-center bg-[#4682b4]">
                        <div className="h-[9px] w-[2px] bg-black" />
                      </div>
                    </div>
                    <Arrow d="M13 7L6 13V9H1V5H6V1Z" />
                  </div>
                </div>
                <div className="grid w-[112px] auto-rows-[20px] grid-cols-[repeat(5,20px)] content-start gap-[2px] pl-[2px] pt-[1px]">
                  {PALETTE.map((c, i) => (
                    <div
                      key={i}
                      className="h-5 w-5 border-2 border-t-white border-l-white border-r-[#8a8a8a] border-b-[#8a8a8a]"
                    >
                      <CellArt cell={c} />
                    </div>
                  ))}
                </div>
              </div>
            </div>
          </div>
        </div>
      </div>

      {/* window list */}
      <div className="flex h-[38px] items-center border-t border-[#5a5a5a] bg-gradient-to-b from-[#f0f0f0] to-[#e0e0e0] pl-[5px]">
        <div className="flex h-7 w-[29px] items-center justify-center rounded-[3px] border border-[#bdbdbd] bg-[#f0f0f0]">
          <svg width="14" height="14" viewBox="0 0 14 14" fill="none" stroke="#222" strokeWidth="2">
            <rect x="7" y="1" width="5" height="5" />
            <path d="M4 6H2V12H7V10" />
          </svg>
        </div>
        <div className="ml-[7px] flex gap-[5px]">
          <TaskButton icon={<Vmm />} label="Virtual Machine Manager" />
          <TaskButton
            icon={
              <svg width="16" height="22" viewBox="0 0 16 22" className="mr-[5px]">
                <rect x="1" y="1" width="14" height="20" rx="2" fill="#4a80c8" stroke="#2a5a98" />
                <rect x="5" y="5" width="6" height="3" fill="#e8e8e8" />
                <rect x="5" y="14" width="6" height="3" fill="#e8e8e8" />
                <path d="M1 11H15" stroke="#2a5a98" />
              </svg>
            }
            label="DAY-15"
          />
          <TaskButton active icon={<Vmm />} label="NIhar.a on QEMU/KVM" />
          <TaskButton
            wide
            icon={
              <svg width="20" height="22" viewBox="0 0 20 22">
                <circle cx="10" cy="12.500" r="9" fill="#f2701a" />
                <path d="M10 0C14 3 17 6 17 10L10 8Z" fill="#fbb62a" />
                <path d="M2 7C3 14 13 21 18 11C17 19 6 22 2 14Z" fill="#e5272f" />
                <circle cx="10" cy="12" r="5" fill="#6a3aa8" />
                <circle cx="11" cy="11" r="2.500" fill="#a060e0" />
              </svg>
            }
            label="RTimothyEdwards/open_pdks: PDK i..."
          />
        </div>
        <div className="ml-auto mr-[13px] flex gap-[3px]">
          <div className="h-[26px] w-[53px] border-[3px] border-[#808080] bg-[#f4f4f4]" />
          <div className="h-[26px] w-[54px] border border-[#d0d0d0] bg-[#dcdcdc]" />
          <div className="h-[26px] w-[54px] border border-[#d0d0d0] bg-[#dcdcdc]" />
          <div className="h-[26px] w-[54px] rounded-r-[4px] border border-[#d0d0d0] bg-[#dcdcdc]" />
        </div>
      </div>
    </div>
  );
}
